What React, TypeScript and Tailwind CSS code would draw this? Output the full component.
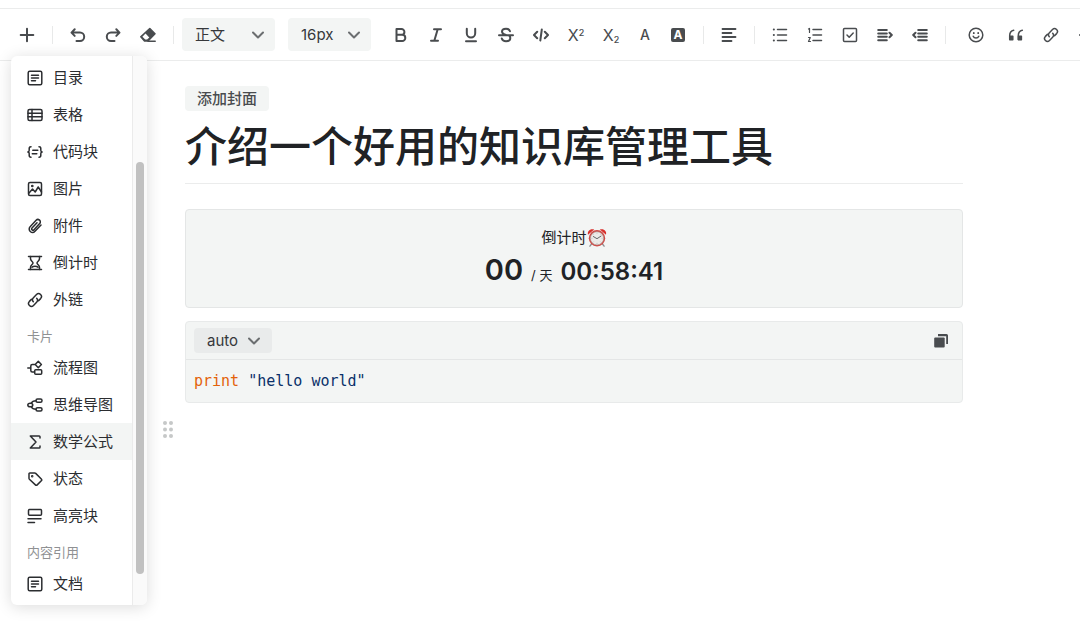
import { useState, type ReactNode } from "react";

type IconProps = { children: ReactNode; width?: number; className?: string };

function Icon({ children, width = 1.5, className = "size-4" }: IconProps) {
  return (
    <svg
      viewBox="0 0 16 16"
      className={"shrink-0 " + className}
      fill="none"
      stroke="currentColor"
      strokeWidth={width}
      strokeLinecap="round"
      strokeLinejoin="round"
      aria-hidden="true"
    >
      {children}
    </svg>
  );
}

const LINK = (
  <>
    <path d="M6.3 9.7a2.9 2.9 0 0 1 .1-4L9.5 2.5a2.9 2.9 0 0 1 4.1 4.1l-2 2" />
    <path d="M9.7 6.3a2.9 2.9 0 0 1-.1 4L6.5 13.5a2.9 2.9 0 0 1-4.1-4.1l2-2" />
  </>
);

const DOC = (
  <>
    <rect x="1.2" y="1.2" width="13.6" height="13.6" rx="1.5" />
    <path d="M4.5 5.2h7M4.5 8h7M4.5 10.8h4" />
  </>
);

type Item = { label: string; icon: ReactNode };

/** Insert menu, grouped by section. */
const MENU: { title?: string; items: Item[] }[] = [
  {
    items: [
      { label: "目录", icon: DOC },
      {
        label: "表格",
        icon: (
          <>
            <rect x="1" y="2.5" width="14" height="11" rx="1.5" />
            <path d="M1 6.2h14M1 9.8h14M5 2.5v11" />
          </>
        ),
      },
      {
        label: "代码块",
        icon: (
          <>
            <path d="M4 2.8c-1.5 0-1.8.6-1.8 1.7v1.8c0 1-.4 1.7-1.4 1.7 1 0 1.4.7 1.4 1.7v1.8c0 1.1.3 1.7 1.8 1.7" />
            <path d="M12 2.8c1.5 0 1.8.6 1.8 1.7v1.8c0 1 .4 1.7 1.4 1.7-1 0-1.4.7-1.4 1.7v1.8c0 1.1-.3 1.7-1.8 1.7" />
            <path d="M5.8 6.3h5M5.3 9.7h4.5" />
          </>
        ),
      },
      {
        label: "图片",
        icon: (
          <>
            <rect x="1.5" y="1.5" width="13" height="13" rx="1.5" />
            <path d="M1.8 12.2 5.5 8l2.7 3 3-5 3.3 5" />
            <circle cx="5.3" cy="5" r=".6" />
          </>
        ),
      },
      {
        label: "附件",
        icon: (
          <path d="m14 7-6 6.3a3.3 3.3 0 0 1-4.9-4.6l6-6.4a2.4 2.4 0 0 1 3.6 3.3L7 11.7a1.3 1.3 0 0 1-2-1.7l5-5.3" />
        ),
      },
      {
        label: "倒计时",
        icon: (
          <>
            <path d="M1.5 1.5h13M1.5 14.5h13" />
            <path d="M3.5 1.5v2.3c0 1.9 2.500 2.7 2.500 4.2s-2.500 2.3-2.500 4.2v2.3M12.5 1.5v2.3c0 1.9-2.500 2.7-2.500 4.2s2.500 2.3 2.500 4.2v2.3" />
            <path d="M5 12.2c1.5-1.200 4.500-1.200 6 0" />
          </>
        ),
      },
      { label: "外链", icon: LINK },
    ],
  },
  {
    title: "卡片",
    items: [
      {
        label: "流程图",
        icon: (
          <>
            <path d="M.8 8h3M7.5 4.5H5.3a1.5 1.5 0 0 0-1.5 1.5v4.5A1.5 1.5 0 0 0 5.3 12h2.2" />
            <path d="m11.3 1.3 3.1 3.2-3.1 3.2-3.1-3.2z" />
            <rect x="7.7" y="9.8" width="7" height="4.5" rx="1" />
          </>
        ),
      },
      {
        label: "思维导图",
        icon: (
          <>
            <ellipse cx="3.3" cy="8" rx="2.500" ry="1.8" />
            <rect x="9" y="2" width="6" height="3.3" rx="1.5" />
            <rect x="9" y="10.7" width="6" height="3.3" rx="1.5" />
            <path d="M4.2 6.2C5 4.5 6.5 3.7 9 3.7M4.2 9.8C5 11.5 6.5 12.3 9 12.3" />
          </>
        ),
      },
      {
        label: "数学公式",
        icon: <path d="M13 4V2.8c0-.5-.3-.8-.8-.8H3.3L9 8l-5.7 6h8.900c.5 0 .8-.3.8-.8V12" />,
      },
      {
        label: "状态",
        icon: (
          <>
            <path d="M2.7 2h5c.4 0 .8.2 1 .4l5.6 5.600c.5.5.5 1.300 0 1.800l-4.100 4.100c-.5.5-1.300.5-1.800 0L2.400 8.200c-.3-.3-.4-.6-.4-1V2.700c0-.4.3-.7.7-.7z" />
            <circle cx="5.2" cy="5.3" r=".5" />
          </>
        ),
      },
      {
        label: "高亮块",
        icon: (
          <>
            <rect x="1.5" y="1.5" width="13" height="5.8" rx="1" />
            <path d="M1 10.8h13M1 14.5h6.5" />
          </>
        ),
      },
    ],
  },
  { title: "内容引用", items: [{ label: "文档", icon: DOC }] },
];

function Tool({ label, children }: { label: string; children: ReactNode }) {
  return (
    <button
      type="button"
      aria-label={label}
      className="flex h-7 w-7 shrink-0 items-center justify-center rounded hover:bg-[#f3f5f4]"
    >
      {children}
    </button>
  );
}

function Divider() {
  return <span className="mx-[11px] h-[18px] w-px shrink-0 bg-[#e8e9e9]" />;
}

type PickerProps = { label: string; options: string[]; box: string; arrow: string };

function Picker({ label, options, box, arrow }: PickerProps) {
  return (
    <div className="relative shrink-0">
      <select
        aria-label={label}
        className={"block appearance-none rounded pt-0.5 pl-[13px] text-[15px] text-[#36383b] outline-none " + box}
      >
        {options.map((o) => (
          <option key={o}>{o}</option>
        ))}
      </select>
      <svg
        viewBox="0 0 12 8"
        className={"pointer-events-none absolute top-1/2 h-2 w-3 -translate-y-1/2 text-[#6b6e70] " + arrow}
        fill="none"
        stroke="currentColor"
        strokeWidth="2"
        strokeLinecap="round"
        strokeLinejoin="round"
        aria-hidden="true"
      >
        <path d="m1 1.5 5 5 5-5" />
      </svg>
    </div>
  );
}

function Toolbar() {
  return (
    <div className="flex items-center overflow-hidden border-y border-[#ebecec] py-[9px] pl-[13px] text-[#494c4f]">
      <Tool label="插入">
        <Icon width={2}>
          <path d="M8 1.7v12.6M1.7 8h12.6" />
        </Icon>
      </Tool>
      <Divider />
      <div className="flex gap-[7px]">
        <Tool label="撤销">
          <Icon width={2}>
            <path d="M4.7 2.3 1.5 5.6l3.2 3.3M1.8 5.6H10a4.2 4.2 0 0 1 0 8.4H6.5" />
          </Icon>
        </Tool>
        <Tool label="重做">
          <Icon width={2}>
            <path d="m11.3 2.3 3.2 3.3-3.2 3.3M14.2 5.6H6a4.2 4.2 0 0 0 0 8.4h3.5" />
          </Icon>
        </Tool>
        <Tool label="清除格式">
          <Icon width={1.5}>
            <path d="M9.8 1.5 15 6.7l-7 7.3H4.5L.8 9.8z" fill="currentColor" />
            <path d="m5.5 6.5 3.8 3.9-2.2 2.2H5.2L2.4 9.7z" fill="white" stroke="none" />
            <path d="M8 14.2h7.2" />
          </Icon>
        </Tool>
      </div>
      <span className="mr-2 ml-[11px] h-[18px] w-px shrink-0 bg-[#e8e9e9]" />
      <div className="mr-4 flex gap-[13px]">
        <Picker
          label="段落样式"
          options={["正文", "标题 1", "标题 2", "标题 3"]}
          box="h-[33px] w-[93px] bg-[#f3f5f4]"
          arrow="right-[11px]"
        />
        <Picker
          label="字号"
          options={["16px", "14px", "18px", "24px"]}
          box="h-[33px] w-[83px] bg-[#f3f5f4]"
          arrow="right-[11px]"
        />
      </div>
      <div className="flex gap-[7px]">
        <Tool label="加粗">
          <Icon width={2}>
            <path d="M3.5 2h5a2.9 2.9 0 0 1 0 5.8h-5zM3.5 7.8h5.7a3.1 3.1 0 0 1 0 6.2H3.500z" />
          </Icon>
        </Tool>
        <Tool label="斜体">
          <Icon width={2}>
            <path d="M6 2.2h7M3 13.8h7M9.7 2.2 6.3 13.8" />
          </Icon>
        </Tool>
        <Tool label="下划线">
          <Icon width={2}>
            <path d="M3.8 1.8v4.5a4.2 4.2 0 0 0 8.4 0V1.8M3 14.2h10" />
          </Icon>
        </Tool>
        <Tool label="删除线">
          <Icon width={2}>
            <path d="M12 4.2C11.5 2.7 10 1.8 8 1.8c-2.300 0-4 1-4 2.8 0 1.9 1.500 2.800 4 3.400M1 8.200h14M3.800 11.500c.5 1.800 2 2.700 4.200 2.700 2.500 0 4.300-1.200 4.300-3.200 0-1-.4-1.700-1-2.200" />
          </Icon>
        </Tool>
        <Tool label="行内代码">
          <Icon width={2}>
            <path d="M4.2 4.7 1 8l3.2 3.3M11.8 4.7 15 8l-3.2 3.3M8.8 2.5 7.3 13.5" />
          </Icon>
        </Tool>
        <Tool label="上标">
          <span className="text-base">
            X<sup className="text-[9px] font-medium">2</sup>
          </span>
        </Tool>
        <Tool label="下标">
          <span className="text-base">
            X<sub className="text-[9px] font-medium">2</sub>
          </span>
        </Tool>
      </div>
      <div className="ml-1.5 flex gap-[5px]">
        <Tool label="字体颜色">
          <span className="text-[14px] font-medium">A</span>
        </Tool>
        <Tool label="背景颜色">
          <span className="flex size-[14px] items-center justify-center rounded-[2px] bg-[#494c4f] text-[12px] font-bold text-white">
            A
          </span>
        </Tool>
      </div>
      <Divider />
      <Tool label="对齐">
        <Icon width={1.8}>
          <path d="M1.5 2h13M1.5 6h9M1.5 10h13M1.5 14h9" />
        </Icon>
      </Tool>
      <Divider />
      <div className="flex gap-[7px]">
        <Tool label="无序列表">
          <Icon>
            <path d="M5.5 2.5h9M5.5 8h9M5.5 13.5h9" />
            <path d="M1.8 2.5h.1M1.8 8h.1M1.8 13.5h.1" strokeWidth="2" />
          </Icon>
        </Tool>
        <Tool label="有序列表">
          <Icon>
            <path d="M6 2.5h8.5M6 8h8.5M6 13.5h8.5" />
            <path d="m1.5 2 1-.6v4M1.5 10.5h1.8L1.5 14.5h2" strokeWidth="1.2" />
          </Icon>
        </Tool>
        <Tool label="任务列表">
          <Icon>
            <rect x="1.5" y="1.5" width="13" height="13" rx="1" />
            <path d="m5 8 2.2 2.2L11.2 6" />
          </Icon>
        </Tool>
        <Tool label="增加缩进">
          <Icon width={2}>
            <path d="M1.2 3h8.6M1.2 6.4h8.6M1.2 9.8h8.6M1.2 13.2h8.6M12.5 5.7 14.8 8l-2.3 2.3" />
          </Icon>
        </Tool>
        <Tool label="减少缩进">
          <Icon width={2}>
            <path d="M6.2 3h8.6M6.2 6.4h8.6M6.2 9.8h8.6M6.2 13.2h8.6M3.500 5.7 1.200 8l2.300 2.300" />
          </Icon>
        </Tool>
      </div>
      <span className="mr-4 ml-[11px] h-[18px] w-px shrink-0 bg-[#e8e9e9]" />
      <Tool label="表情">
        <Icon>
          <circle cx="8" cy="8" r="6.8" />
          <path d="M5.2 9.3c.5 1.2 1.5 1.8 2.8 1.8s2.3-.6 2.8-1.8" />
          <path d="M5.8 6v.2M10.2 6v.2" strokeWidth="1.8" />
        </Icon>
      </Tool>
      <div className="ml-3 flex gap-[7px]">
        <Tool label="引用">
          <Icon>
            <path d="M5.7 3.2C3.2 3.8 1.7 5.6 1.7 8.5v4M14.300 3.200c-2.500.6-4 2.400-4 5.300v4" />
            <path d="M1.9 9.2h2.9v3.6H1.9zM10.5 9.2h2.9v3.6h-2.900z" fill="currentColor" />
          </Icon>
        </Tool>
        <Tool label="链接">
          <Icon>{LINK}</Icon>
        </Tool>
        <Tool label="更多">
          <Icon width={2}>
            <path d="M2 8h.1M8 8h.1M14 8h.1" />
          </Icon>
        </Tool>
      </div>
    </div>
  );
}

function InsertMenu() {
  const [active, setActive] = useState("数学公式");

  return (
    <div className="absolute top-full left-[11px] flex -mt-[5px] w-[136px] overflow-hidden rounded-md bg-white font-['Noto_Sans_CJK_SC',sans-serif] shadow-[0_2px_16px_rgba(0,0,0,0.14)]">
      <div className="grow py-[3px]">
        {MENU.map((group) => (
          <section key={group.title ?? "base"}>
            {group.title && (
              <h3 className="flex h-[31px] items-center pt-1 pl-4 text-[13px] text-[#8f9193]">{group.title}</h3>
            )}
            {group.items.map((item) => (
              <button
                key={item.label}
                type="button"
                onMouseEnter={() => setActive(item.label)}
                className={
                  "flex h-[37px] w-full items-center gap-2.5 pl-4 text-[15px] text-[#2b2d30] " +
                  (active === item.label ? "bg-[#f3f5f4]" : "")
                }
              >
                <Icon>{item.icon}</Icon>
                {item.label}
              </button>
            ))}
          </section>
        ))}
      </div>
      {/* scrollbar */}
      <div className="flex w-[15px] shrink-0 flex-col border-l border-[#ebebeb] bg-[#fafafa] px-[3px] pt-[106px] pb-[31px]">
        <div className="grow rounded-full bg-[#c1c1c1]" />
      </div>
    </div>
  );
}

function AlarmClock() {
  return (
    <svg viewBox="0 0 20 20" className="size-5" role="img" aria-label="闹钟">
      <path d="m4.5 16-1.6 2.2M15.5 16l1.6 2.2" stroke="#8b8f92" strokeWidth="1.3" strokeLinecap="round" />
      <path d="M1 6.8C0 3.300 3 .4 7.200 1.600zM19 6.800C20 3.300 17 .4 12.800 1.600z" fill="#d8302c" />
      <circle cx="10" cy="10.3" r="8.2" fill="#cf4a45" />
      <circle cx="10" cy="10.3" r="6.6" fill="#ecebe8" stroke="#a8908d" strokeWidth=".6" />
      <path
        d="M10 4.700v1M10 14.900v1M4.400 10.300h1M14.600 10.300h1M6 6.300l.7.7M14 6.300l-.7.7M6 14.300l.7-.7M14 14.300l-.7-.7"
        stroke="#a4a4a4"
        strokeWidth=".6"
      />
      <path d="m6.300 8.500 3.700 2.200 4-2.600" fill="none" stroke="#55585a" strokeWidth=".9" strokeLinecap="round" />
    </svg>
  );
}

function Countdown() {
  return (
    <section className="mt-[25px] flex flex-col items-center rounded border border-[#e4e6e6] bg-[#f3f5f4] pt-[18px] pb-5 text-[#202225]">
      <p className="flex h-5 items-center text-[15px]">
        倒计时
        <AlarmClock />
      </p>
      <p className="mt-1 flex h-[35px] items-baseline font-semibold">
        <span className="text-[29px] leading-[35px]">00</span>
        <span className="mx-2 text-[13px] font-normal">/ 天</span>
        <span className="text-[24px] leading-[35px]">00:58:41</span>
      </p>
    </section>
  );
}

function CodeBlock() {
  return (
    <section className="mt-[13px] rounded border border-[#e8eaea] bg-[#f3f5f4]">
      <div className="flex items-center justify-between border-b border-[#e4e6e6] py-1.5 pr-[13px] pl-2">
        <Picker
          label="代码语言"
          options={["auto", "python", "javascript"]}
          box="h-[25px] w-[78px] bg-[#e9ebeb]"
          arrow="right-3"
        />
        <button type="button" aria-label="复制代码" className="text-[#494c4f]">
          <svg viewBox="0 0 16 16" className="size-4" fill="currentColor" aria-hidden="true">
            <path d="M5 1h8.5A1.5 1.5 0 0 1 15 2.500V11h-1.800V3.300H5z" />
            <rect x="1.2" y="4.5" width="10.5" height="10" rx="1" />
          </svg>
        </button>
      </div>
      <pre className="px-2 py-2.5 text-[15px] leading-[22px] text-[#0a3069]">
        <code className="block font-['DejaVu_Sans_Mono',monospace]">
          <span className="text-[#e36209]">print</span> "hello world"
        </code>
      </pre>
    </section>
  );
}

export default function App() {
  return (
    <div className="min-h-screen bg-white pt-2 font-['Inter','Noto_Sans_CJK_SC',sans-serif]">
      <header className="relative">
        <Toolbar />
        <InsertMenu />
      </header>

      <main className="w-full max-w-[963px] pt-[25px] pl-[163px]">
        <article className="pl-[22px]">
          <button
            type="button"
            className="flex h-[25px] items-center rounded bg-[#f3f5f4] px-3 font-['Noto_Sans_CJK_SC',sans-serif] text-[15px] font-medium text-[#494c4f]"
          >
            添加封面
          </button>
          <h1 className="border-b border-[#ebecec] pt-[7px] pb-[7px] text-[42px] leading-[58px] font-medium text-[#202225]">
            介绍一个好用的知识库管理工具
          </h1>
          <Countdown />
          <CodeBlock />
        </article>

        <button type="button" aria-label="拖动" className="mt-[17px] block text-[#c6c8c8]">
          <svg viewBox="0 0 10 20" className="h-5 w-2.5" fill="currentColor" aria-hidden="true">
            {[3, 9.5, 16].map((y) => (
              <g key={y}>
                <circle cx="2" cy={y} r="2" />
                <circle cx="8" cy={y} r="2" />
              </g>
            ))}
          </svg>
        </button>
      </main>
    </div>
  );
}
